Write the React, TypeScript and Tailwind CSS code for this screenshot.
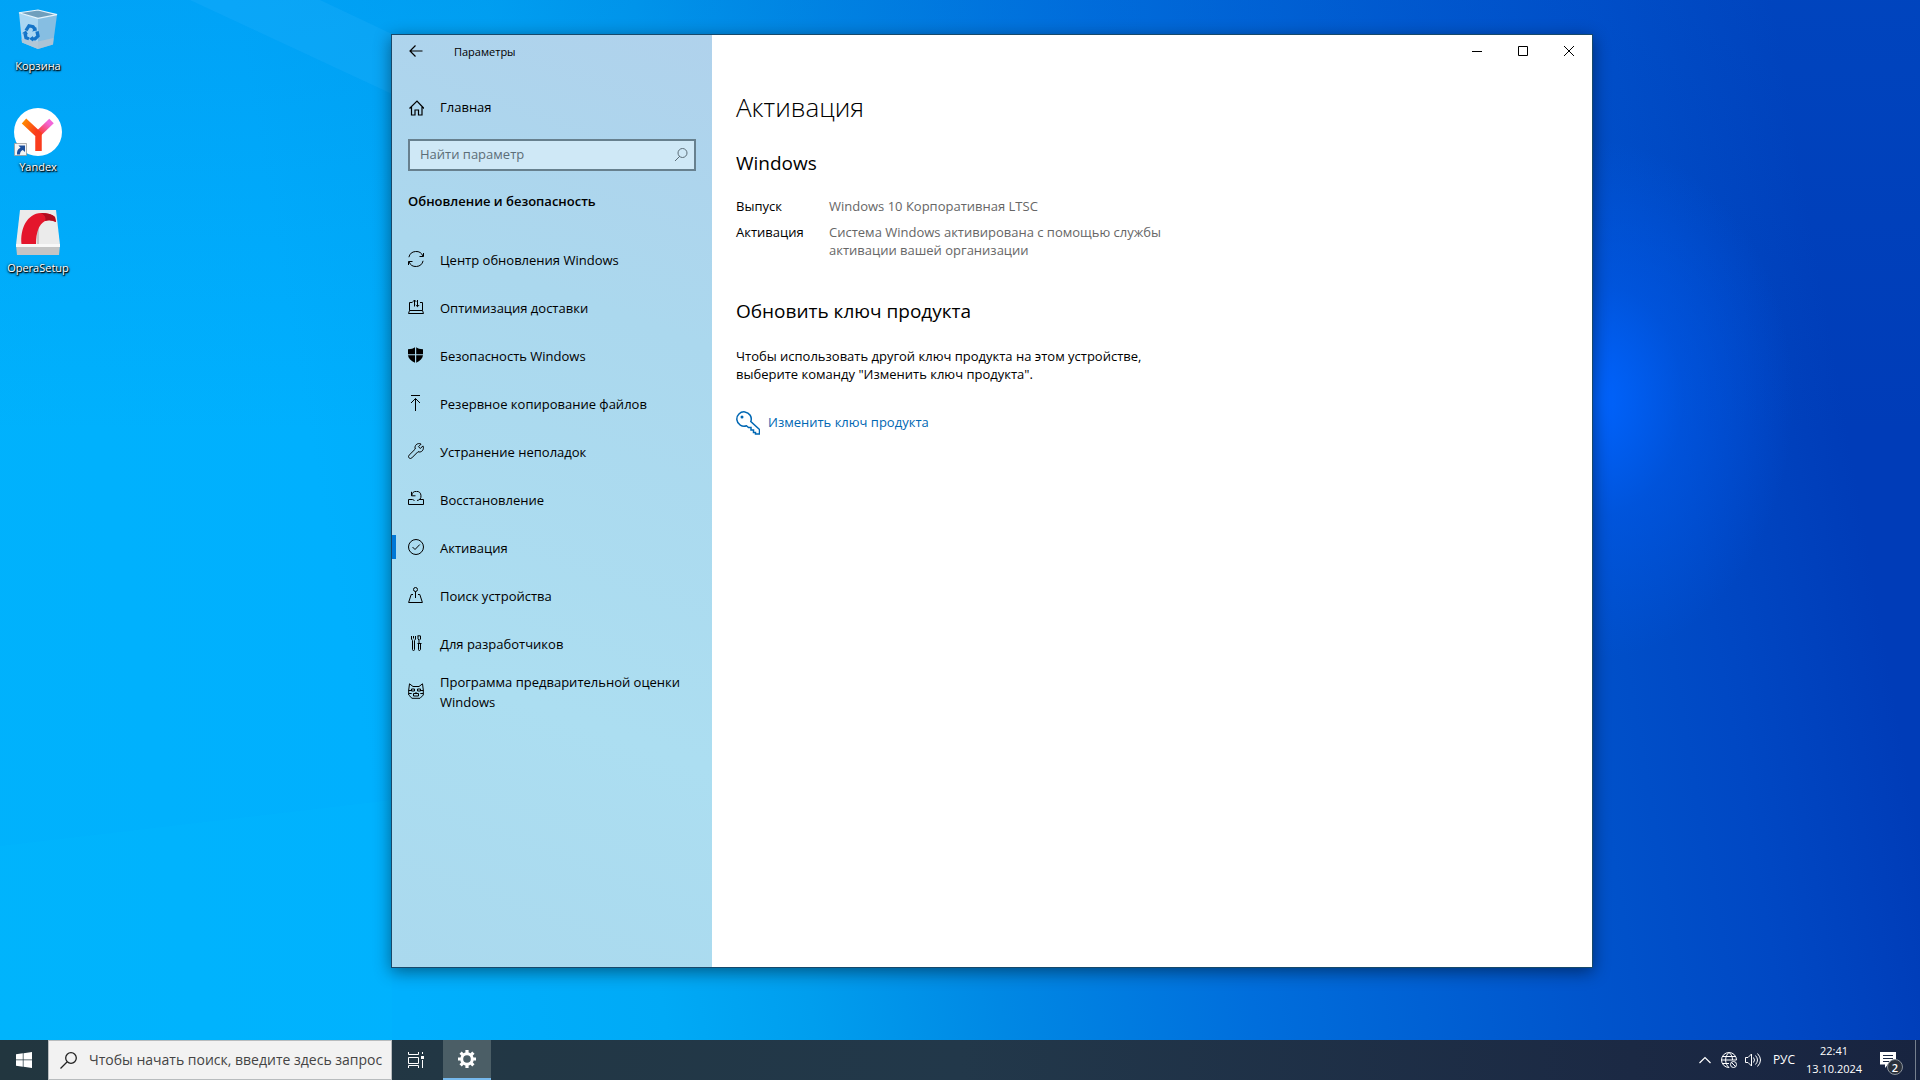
import React from "react";

type IconProps = { className?: string; children: React.ReactNode; box?: string };

function Icon({ className = "size-4", children, box = "0 0 16 16" }: IconProps) {
  return (
    <svg
      aria-hidden="true"
      viewBox={box}
      className={`${className} shrink-0`}
      fill="none"
      stroke="currentColor"
      strokeWidth="1"
    >
      {children}
    </svg>
  );
}

const navItems: { label: string; icon: React.ReactNode; active?: boolean }[] = [
  {
    label: "Центр обновления Windows",
    icon: <path d="M.9 6.200A7.400 7.400 0 0 1 15 5.200M15.500 2v3.500h-4M15.100 9.800A7.400 7.400 0 0 1 1 10.800M.5 14v-3.500h4" />,
  },
  {
    label: "Оптимизация доставки",
    icon: (
      <path d="M4.500 3.500h-3v8L.5 14.500h15l-1-3v-8h-2.500M1.500 11.500h13M6.500 7.500V1M4.800 2.800 6.500 1l1.700 1.800M9.500 1v6.500M7.800 6 9.500 7.700 11.200 6" />
    ),
  },
  {
    label: "Безопасность Windows",
    icon: (
      <path
        d="M7 .3C5.600 1.500 3 2.200 0 2.200V7.200h7zM8.200 .3C9.600 1.500 12 2.200 15 2.200V7.200H8.200zM0 8.300h7V15.700C3 14 .3 11.300 0 8.300zM8.200 8.300H15C14.700 11.300 12 14 8.200 15.700z"
        fill="currentColor"
        stroke="none"
      />
    ),
  },
  {
    label: "Резервное копирование файлов",
    icon: <path d="M3 .5h9M7.500 16V3.500M3 8l4.500-4.500L12 8" />,
  },
  {
    label: "Устранение неполадок",
    icon: (
      <path d="M14.900 2.900 12.300 5.500l-1.800-1.800L13.100 1.100C11.400.2 9.400.5 8.200 1.700 7 2.900 6.700 4.500 7.300 6L1.100 12.200c-.8.8-.8 1.900 0 2.700s1.900.8 2.700 0L10 8.700c1.500.6 3.100.3 4.300-.9 1.200-1.300 1.500-3.300.6-4.900z" />
    ),
  },
  {
    label: "Восстановление",
    icon: <path d="M4.500 8.500h-4v5h15v-5h-4M3.800 4.500A4.600 4.600 0 1 1 9 9.500M3.500 .8v4h4M6.500 9.500l-2-1" />,
  },
  {
    label: "Активация",
    active: true,
    icon: (
      <>
        <circle cx="8" cy="8" r="7.500" />
        <path d="m4.500 8 2.500 2.500 4.800-5" />
      </>
    ),
  },
  {
    label: "Поиск устройства",
    icon: (
      <>
        <circle cx="7.500" cy="2.500" r="2" />
        <path d="M7.500 4.500V11M5 7.500H3.200L.6 15.500h13.800L11.800 7.500H10" />
      </>
    ),
  },
  {
    label: "Для разработчиков",
    icon: (
      <path d="M3.500 1v3l1 1.500v9q0 1 1 1t1-1v-9l1-1.500V1M5.500 1v2.500M9.500.8h3M10 1v3l1 1v3.500M12.500 1v3l-1 1M9.500 8.500h4M10.500 8.500v6q0 1 .8 1t1.200-1v-6" />
    ),
  },
  {
    label: "Программа предварительной оценки Windows",
    icon: (
      <path d="M.7 7 1.500.8 5 3.500h6L14.500.8 15.300 7v5L12 15.300H4L.7 12zM.7 7.500h3M12.300 7.500h3M.7 10.500h3M12.300 10.500h3M3.500 6h3v2h-3zM9.500 6h3v2h-3zM5.500 10.500h5v2.500h-5zM8 9v2" />
    ),
  },
];

function Wallpaper() {
  return (
    <svg aria-hidden="true" viewBox="0 0 1920 1080" preserveAspectRatio="none" className="absolute inset-0 size-full">
      <path d="M190 0 392 94V34L320 0z" fill="#3db8ff" opacity=".16" />
      <path d="M0 846 392 800V1040H0z" fill="#00c4ff" opacity=".12" />
    </svg>
  );
}

function RecycleBin() {
  return (
    <svg aria-hidden="true" viewBox="0 0 48 48" className="size-12">
      <g transform="translate(0 3) scale(1 .93)">
        <path d="m5 3 19 6v33L8 35z" fill="#a9d6f2" />
        <path d="m43 5-19 4v33l15-5z" fill="#86bee2" />
        <path d="m7.500 31 16.500 3 15.500-4-.5 7-15 5-16-7z" fill="#b3c4d2" opacity=".85" />
        <path d="M5 3 24 0l19 5-19 4z" fill="#6f9fbd" stroke="#e6f4fc" strokeWidth="1.200" />
        <g transform="translate(3 2)">
          <path d="m9 20 3-5 4 1 2 3M20 21l1 5-3 3h-3M12 29l-3-1-1-5" fill="none" stroke="#1474c8" strokeWidth="3.400" />
          <path d="m15 21 5-1-1-4zM16 26v6l-4-3zM5 23l4-3 2 4z" fill="#1474c8" />
        </g>
      </g>
    </svg>
  );
}

function YandexLogo() {
  return (
    <svg aria-hidden="true" viewBox="0 0 48 48" className="size-12">
      <defs>
        <linearGradient id="ya-left" x1="0" y1="0" x2="0.600" y2="0.600">
          <stop offset="0" stopColor="#ff8800" />
          <stop offset="1" stopColor="#fa3c1d" />
        </linearGradient>
        <linearGradient id="ya-right" x1="1" y1="0" x2="0" y2="1">
          <stop offset="0.200" stopColor="#f266d8" />
          <stop offset="0.900" stopColor="#fc3f3d" />
        </linearGradient>
      </defs>
      <circle cx="24" cy="24" r="24" fill="#fff" />
      <path d="M37.500 13 24.500 25.500" stroke="url(#ya-right)" strokeWidth="6.500" />
      <path d="m10 13 14.500 13.500V43" fill="none" stroke="url(#ya-left)" strokeWidth="6.500" />
      <path d="M.5 35.500h12v12H.5z" fill="#f4f4f4" stroke="#9b9b9b" strokeWidth=".8" />
      <path d="M4.500 37.500H11V44l-2.200-2q-2.800 1-2.800 4.500H3q-.5-5 3.500-6.800z" fill="#1d4f9c" />
    </svg>
  );
}

function OperaInstaller() {
  return (
    <svg aria-hidden="true" viewBox="0 0 48 48" className="size-12">
      <path d="M6 1h36l4 35H2z" fill="#ebebeb" />
      <path d="M2 36h44l-1 10H3z" fill="#c4c4c4" />
      <path d="M2 35h44v3H2z" fill="#f8f8f8" />
      <path d="M24 5v30" stroke="#a6a6a6" />
      <path d="M7.500 35C6 20 13 4.500 27 4q10 0 14 4l1 5q-6-3-11-1-9 5-9 23z" fill="#e4162c" />
      <path d="M27 4q10 0 14 4l1 5q-6-3-11-1 2-5-4-8z" fill="#b00d20" />
    </svg>
  );
}

function DesktopIcon({ label, children }: { label: string; children: React.ReactNode }) {
  return (
    <button
      type="button"
      className="flex h-[101px] w-[76px] flex-col items-center gap-[3px] text-[11px] leading-4 text-white [text-shadow:1px_1px_1px_#000,0_1px_2px_#000,0_0_3px_#0008]"
    >
      {children}
      <span>{label}</span>
    </button>
  );
}

function Sidebar() {
  return (
    <aside className="flex w-[320px] shrink-0 flex-col bg-[linear-gradient(200deg,#b0d2ec_0%,#abd8ee_30%,#acdef1_70%,#aad9ee_100%)]">
      <div className="flex h-8 items-center text-[11px]">
        <button type="button" aria-label="Назад" className="flex h-8 w-12 items-center justify-center">
          <Icon className="h-3 w-3.5" box="0 0 14 12">
            <path d="M13.500 6H1M6.500.5 1 6l5.500 5.500" strokeWidth="1.200" />
          </Icon>
        </button>
        <span className="pl-3.5 pt-0.5">Параметры</span>
      </div>
      <a href="#home" className="mt-[17px] flex h-12 items-center gap-4 pl-4">
        <Icon>
          <path d="M1.500 8.500 9 1l7 7.500M3.500 7v8h3.500V10h3.500v5H14V7" strokeWidth="1.200" />
        </Icon>
        Главная
      </a>
      <div className="relative mx-4 mt-[7px]">
        <input
          type="text"
          aria-label="Найти параметр"
          placeholder="Найти параметр"
          className="block h-8 w-full border-2 border-[#67808e] bg-[#cfe8f6] px-2.5 pb-0.5 placeholder:text-[#5c6d77]"
        />
        <Icon className="absolute right-1.5 top-2 size-4">
          <path d="M1 14 6 9" stroke="#5c6d77" />
          <circle cx="8.500" cy="6" r="4.500" stroke="#5c6d77" />
        </Icon>
      </div>
      <h2 className="mt-5 px-4 font-semibold leading-5">Обновление и безопасность</h2>
      <nav className="mt-6 flex flex-col">
        {navItems.map((item) => (
          <a key={item.label} href="#settings" className="relative flex min-h-12 items-center gap-4 pl-4 pr-4 leading-5">
            {item.active && <span className="absolute left-0 top-3 h-6 w-1 bg-[#0078d7]" />}
            <Icon>{item.icon}</Icon>
            <span className="pt-0.5">{item.label}</span>
          </a>
        ))}
      </nav>
    </aside>
  );
}

function Content() {
  return (
    <main className="flex min-w-0 flex-1 flex-col bg-white">
      <div className="flex h-8 justify-end">
        <button type="button" aria-label="Свернуть" className="flex w-[46px] items-center justify-center">
          <Icon className="size-2.5" box="0 0 10 10"><path d="M0 5.500h10" /></Icon>
        </button>
        <button type="button" aria-label="Развернуть" className="flex w-[46px] items-center justify-center">
          <Icon className="size-2.5" box="0 0 10 10"><path d="M.5 .5h9v9h-9z" /></Icon>
        </button>
        <button type="button" aria-label="Закрыть" className="flex w-[46px] items-center justify-center">
          <Icon className="size-2.5" box="0 0 10 10"><path d="m0 0 10 10M10 0 0 10" /></Icon>
        </button>
      </div>
      <div className="max-w-[490px] px-6 pt-5">
        <h1 className="text-[26px] font-light leading-10">Активация</h1>
        <h2 className="mt-[22px] text-[19px] leading-7">Windows</h2>
        <dl className="mt-5 grid grid-cols-[93px_1fr] gap-y-2 leading-[18px]">
          <dt>Выпуск</dt>
          <dd className="text-[#666]">Windows 10 Корпоративная LTSC</dd>
          <dt>Активация</dt>
          <dd className="text-[#666]">Система Windows активирована с помощью службы активации вашей организации</dd>
        </dl>
        <h2 className="mt-[38px] text-[19px] leading-7">Обновить ключ продукта</h2>
        <p className="mt-[22px] leading-[18px]">
          Чтобы использовать другой ключ продукта на этом устройстве, выберите команду "Изменить ключ продукта".
        </p>
        <a href="#key" className="mt-7 flex items-center gap-2 text-[#0067b3]">
          <Icon className="size-6" box="0 0 24 24">
            <path d="M14.800 10.500A7.200 7.200 0 1 0 10.500 14.800L12.500 16.500H15v2.500h2.500v2.500h2V23h4v-4.500z" strokeWidth="1.500" />
            <circle cx="6" cy="6" r="1.500" fill="currentColor" stroke="none" />
          </Icon>
          Изменить ключ продукта
        </a>
      </div>
    </main>
  );
}

function Taskbar() {
  return (
    <footer className="relative flex h-10 shrink-0 bg-[linear-gradient(90deg,#22363f_0%,#22384a_50%,#1b2944_85%,#182440_100%)] text-[11px] text-white">
      <button type="button" aria-label="Пуск" className="flex w-12 items-center justify-center">
        <svg aria-hidden="true" viewBox="0 0 16 16" className="size-4" fill="#fff">
          <path d="M0 2.200 6.800 1.300V7.600H0zM7.500 1.200 16 0V7.600H7.500zM0 8.300H6.800V14.700L0 13.800zM7.500 8.300H16V16L7.500 14.800z" />
        </svg>
      </button>
      <label className="flex w-[344px] items-center gap-3 border border-[#b8bcbe] bg-[#f2f2f2] pl-[11px] text-[#222]">
        <Icon className="size-[17px]" box="0 0 17 17">
          <circle cx="11" cy="6" r="5.300" strokeWidth="1.300" />
          <path d="M.5 16.500 7 10" strokeWidth="1.300" />
        </Icon>
        <input
          type="text"
          aria-label="Поиск"
          placeholder="Чтобы начать поиск, введите здесь запрос"
          className="min-w-0 flex-1 bg-transparent text-sm placeholder:text-[#444]"
        />
      </label>
      <button type="button" aria-label="Представление задач" className="mr-[3px] flex w-12 items-center justify-center">
        <Icon>
          <path d="M.5 0v2.500h10V0M.5 5.500h10v6H.5zM.5 16v-2.500h10V16M14.500 0v2M14.500 8v8" />
          <path d="M13 4h3v3h-3z" fill="currentColor" stroke="none" />
        </Icon>
      </button>
      <button type="button" aria-label="Параметры" className="flex w-12 items-center justify-center border-b-2 border-[#76b9ed] bg-[#4b5e66]">
        <svg aria-hidden="true" viewBox="0 0 18 18" className="size-[18px]" fill="none" stroke="#fff">
          <circle cx="9" cy="9" r="5.300" strokeWidth="3" />
          <path d="M9 0v3M9 15v3M0 9h3M15 9h3M2.600 2.600l2.200 2.200M13.200 13.200l2.200 2.200M15.400 2.600l-2.200 2.200M4.800 13.200l-2.200 2.200" strokeWidth="3.200" />
        </svg>
      </button>
      <div className="ml-auto flex items-center">
        <button type="button" aria-label="Скрытые значки" className="flex w-6 justify-center">
          <Icon className="h-2 w-3" box="0 0 12 8"><path d="m.5 7 5.500-5.500L11.500 7" strokeWidth="1.200" /></Icon>
        </button>
        <button type="button" aria-label="Сеть" className="flex w-6 justify-center">
          <Icon>
            <path d="M8 15.500A7.500 7.500 0 1 1 15.500 8M8 .5C3.500 4 3.500 12 8 15.500M8 .5C10.500 2.500 11.500 5 11.500 8M1.500 4.500h13M.5 8h15M1.500 11.500H8" />
            <circle cx="12.500" cy="12.500" r="3" />
            <path d="m10.500 10.500 4 4" />
          </Icon>
        </button>
        <button type="button" aria-label="Громкость" className="flex w-6 justify-center">
          <Icon>
            <path d="M.5 5.500H3l3.500-3.500v12L3 10.500H.5zM8.500 5.500q2 2.500 0 5M10.500 3.500q4 4.500 0 9M12.500 1.500q6 6.500 0 13" />
          </Icon>
        </button>
        <button type="button" className="w-[38px] text-xs">РУС</button>
        <button type="button" className="w-[62px] text-center leading-[18px]">
          22:41
          <br />
          13.10.2024
        </button>
        <button type="button" aria-label="Уведомления: 2" className="relative flex w-[45px] justify-center">
          <svg aria-hidden="true" viewBox="0 0 16 16" className="size-4">
            <path d="M0 0h16v12.500H8L5 16v-3.500H0z" fill="#fff" />
            <path d="M3 3.500h10M3 6.500h10M3 9.500h6" stroke="#1b2944" />
          </svg>
          <span className="absolute left-[22px] top-[7px] flex size-4 items-center justify-center rounded-full border border-[#8b929c] bg-[#2b323c] font-semibold leading-none">
            2
          </span>
        </button>
        <span className="ml-[5px] h-10 w-[5px] border-l border-[#76808e]" />
      </div>
    </footer>
  );
}

export default function App() {
  return (
    <div className="relative flex min-h-screen flex-col bg-[radial-gradient(ellipse_200px_260px_at_83%_37%,#0064ff_0%,#005cf080_45%,#0050d000_100%),linear-gradient(180deg,#0068d830_0%,#0068d800_40%),linear-gradient(80deg,#00b2fc_0%,#00b0fe_20%,#00aaf6_32%,#009eee_39%,#0088e4_48%,#006edc_60%,#0054cc_76%,#0048c4_85%,#003cb8_93%,#003cb8_100%)] font-['Open_Sans','Noto_Sans',sans-serif] text-[13px] text-black">
      <Wallpaper />
      <div className="relative flex-1">
        <div className="flex flex-col pt-[7px]">
          <DesktopIcon label="Корзина"><RecycleBin /></DesktopIcon>
          <DesktopIcon label="Yandex"><YandexLogo /></DesktopIcon>
          <DesktopIcon label="OperaSetup"><OperaInstaller /></DesktopIcon>
        </div>
        <section
          aria-label="Параметры"
          className="absolute bottom-[72px] left-[391px] right-[327px] top-[34px] flex border border-[#17496b] shadow-[0_4px_16px_rgba(0,0,0,0.45)]"
        >
          <Sidebar />
          <Content />
        </section>
      </div>
      <Taskbar />
    </div>
  );
}
